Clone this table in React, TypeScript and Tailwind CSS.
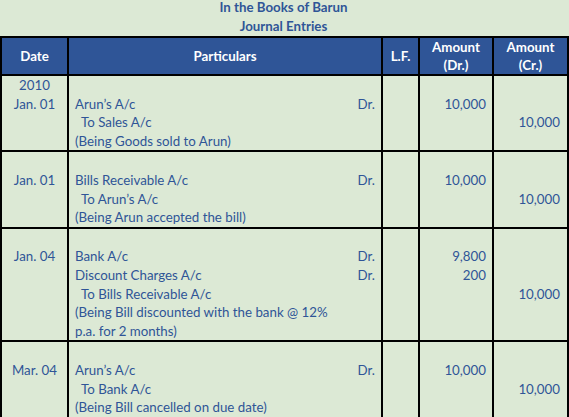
import React from 'react';

type Entry = {
  date: string[];
  lines: { text: string; dr?: boolean; indent?: boolean }[];
  debit: string[];
  credit: string[];
};

// each array index is one line inside the row
const ENTRIES: Entry[] = [
  {
    date: ['2010', 'Jan. 01'],
    lines: [
      { text: '' },
      { text: 'Arun’s A/c', dr: true },
      { text: 'To Sales A/c', indent: true },
      { text: '(Being Goods sold to Arun)' },
    ],
    debit: ['', '10,000'],
    credit: ['', '', '10,000'],
  },
  {
    date: ['', 'Jan. 01'],
    lines: [
      { text: '' },
      { text: 'Bills Receivable A/c', dr: true },
      { text: 'To Arun’s A/c', indent: true },
      { text: '(Being Arun accepted the bill)' },
    ],
    debit: ['', '10,000'],
    credit: ['', '', '10,000'],
  },
  {
    date: ['', 'Jan. 04'],
    lines: [
      { text: '' },
      { text: 'Bank A/c', dr: true },
      { text: 'Discount Charges A/c', dr: true },
      { text: 'To Bills Receivable A/c', indent: true },
      { text: '(Being Bill discounted with the bank @ 12%' },
      { text: 'p.a. for 2 months)' },
    ],
    debit: ['', '9,800', '200'],
    credit: ['', '', '', '10,000'],
  },
  {
    date: ['', 'Mar. 04'],
    lines: [
      { text: '' },
      { text: 'Arun’s A/c', dr: true },
      { text: 'To Bank A/c', indent: true },
      { text: '(Being Bill cancelled on due date)' },
    ],
    debit: ['', '10,000'],
    credit: ['', '', '10,000'],
  },
];

const Lines = ({ items }: { items: string[] }) => (
  <>
    {items.map((t, i) => (
      <div key={i} className="h-[18.6px] whitespace-nowrap">
        {t}
      </div>
    ))}
  </>
);

export default function App() {
  return (
    <div
      className="w-[569px] h-[417px] overflow-hidden bg-[#dce9d5] text-[#2f5597] text-[13.3px] leading-[18.6px]"
      style={{ fontFamily: 'Lato, "Open Sans", sans-serif' }}
    >
      {/* Title */}
      <div className="-mt-[2px] w-[567px] text-center font-bold leading-[19px]">
        <div>In the Books of Barun</div>
        <div>Journal Entries</div>
      </div>

      <table className="w-[567px] table-fixed border-collapse">
        <colgroup>
          <col className="w-[67px]" />
          <col className="w-[314px]" />
          <col className="w-[37px]" />
          <col className="w-[74px]" />
          <col className="w-[75px]" />
        </colgroup>
        <thead>
          <tr className="h-[36px] bg-[#2f5597] text-white leading-[18px]">
            <th className="border-2 border-black text-center font-bold p-0">Date</th>
            <th className="border-2 border-black text-center font-bold p-0">Particulars</th>
            <th className="border-2 border-black text-center font-bold p-0">L.F.</th>
            <th className="border-2 border-black text-center font-bold p-0">
              <div>Amount</div>
              <div>(Dr.)</div>
            </th>
            <th className="border-2 border-black text-center font-bold p-0">
              <div>Amount</div>
              <div>(Cr.)</div>
            </th>
          </tr>
        </thead>
        <tbody>
          {ENTRIES.map((e, idx) => (
            <tr key={idx}>
              <td className="border-2 border-black align-top text-center p-0">
                <Lines items={e.date} />
              </td>
              <td className="border-2 border-black align-top p-0 pl-[6px] pr-[6px]">
                {e.lines.map((l, i) => (
                  <div key={i} className="h-[18.6px] flex justify-between whitespace-nowrap">
                    <span className={l.indent ? 'pl-[6px]' : ''}>{l.text}</span>
                    {l.dr && <span>Dr.</span>}
                  </div>
                ))}
              </td>
              <td className="border-2 border-black align-top p-0"></td>
              <td className="border-2 border-black align-top text-right p-0 pr-[6px]">
                <Lines items={e.debit} />
              </td>
              <td className="border-2 border-black align-top text-right p-0 pr-[7px]">
                <Lines items={e.credit} />
              </td>
            </tr>
          ))}
        </tbody>
      </table>
    </div>
  );
}
